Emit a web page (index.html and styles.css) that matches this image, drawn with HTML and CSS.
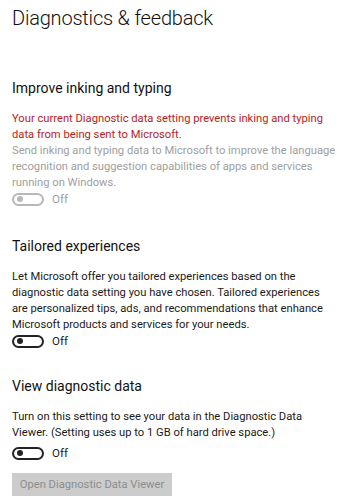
FILE: index.html
```html
<!DOCTYPE html>
<html>
<head>
<meta charset="utf-8">
<link rel="stylesheet" href="styles.css">
</head>
<body>
<div class="page">
  <h1 class="title">Diagnostics &amp; feedback</h1>

  <section class="section first">
    <h2 class="heading">Improve inking and typing</h2>
    <p class="warn">Your current Diagnostic data setting prevents inking and typing data from being sent to Microsoft.</p>
    <p class="desc disabled">Send inking and typing data to Microsoft to improve the language recognition and suggestion capabilities of apps and services running on Windows.</p>
    <div class="toggle-row disabled">
      <span class="toggle"><span class="knob"></span></span>
      <span class="toggle-label">Off</span>
    </div>
  </section>

  <section class="section">
    <h2 class="heading">Tailored experiences</h2>
    <p class="desc">Let Microsoft offer you tailored experiences based on the diagnostic data setting you have chosen. Tailored experiences are personalized tips, ads, and recommendations that enhance Microsoft products and services for your needs.</p>
    <div class="toggle-row">
      <span class="toggle"><span class="knob"></span></span>
      <span class="toggle-label">Off</span>
    </div>
  </section>

  <section class="section last">
    <h2 class="heading">View diagnostic data</h2>
    <p class="desc">Turn on this setting to see your data in the Diagnostic Data Viewer. (Setting uses up to 1 GB of hard drive space.)</p>
    <div class="toggle-row spaced">
      <span class="toggle"><span class="knob"></span></span>
      <span class="toggle-label">Off</span>
    </div>
    <div class="btn">Open Diagnostic Data Viewer</div>
  </section>
</div>
</body>
</html>
```
FILE: styles.css
```css
html, body {
  margin: 0;
  padding: 0;
  background: #ffffff;
}
body {
  font-family: Roboto, "Noto Sans", sans-serif;
  color: #1a1a1a;
  overflow: hidden;
}
.page {
  padding: 3px 0 0 12px;
}
.title {
  margin: 0;
  font-size: 20px;
  font-weight: 300;
  line-height: 30px;
  letter-spacing: -0.2px;
  color: #111;
}
.section {
  margin-top: 29px;
}
.section.first {
  margin-top: 45px;
}
.section.last {
  margin-top: 27px;
}
.heading {
  margin: 0 0 13px 0;
  font-size: 14px;
  font-weight: 400;
  line-height: 20px;
  color: #111;
}
.warn, .desc {
  margin: 0;
  font-size: 11.2px;
  line-height: 16px;
}
.warn {
  color: #b81d24;
}
.desc.disabled {
  color: #a0a0a0;
}
.toggle-row {
  display: flex;
  align-items: center;
  gap: 8px;
  height: 16px;
  margin-top: 0;
}
.toggle-row.spaced {
  margin-top: 4px;
}
.toggle {
  box-sizing: border-box;
  width: 32px;
  height: 13px;
  border: 2px solid #222;
  border-radius: 7px;
  display: flex;
  align-items: center;
  padding-left: 3px;
}
.knob {
  width: 6px;
  height: 6px;
  border-radius: 50%;
  background: #222;
}
.toggle-label {
  font-size: 11.5px;
  color: #1a1a1a;
}
.toggle-row.disabled .toggle {
  border-color: #b8b8b8;
}
.toggle-row.disabled .knob {
  background: #b8b8b8;
}
.toggle-row.disabled .toggle-label {
  color: #a0a0a0;
}
.btn {
  margin-top: 12px;
  width: 160px;
  height: 23px;
  background: #cccccc;
  color: #8c8c8c;
  font-size: 11.2px;
  display: flex;
  align-items: center;
  justify-content: center;
}
```
